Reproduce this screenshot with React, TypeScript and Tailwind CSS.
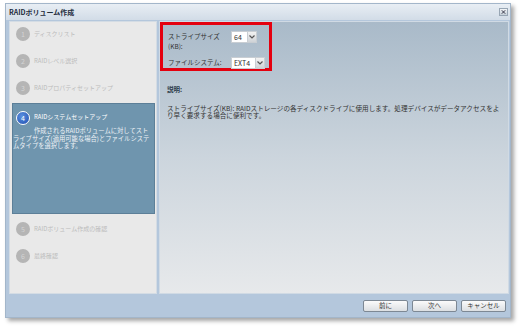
import React from "react";

const font = { fontFamily: '"Noto Sans CJK JP", "Liberation Sans", sans-serif' };

const steps = [
  { n: "1", label: "ディスクリスト", h: "h-[27px]" },
  { n: "2", label: "RAIDレベル選択", h: "h-[27px]" },
  { n: "3", label: "RAIDプロパティセットアップ", h: "h-[22px]" },
];

const after = [
  { n: "5", label: "RAIDボリューム作成の確認", h: "h-[27px]" },
  { n: "6", label: "最終確認", h: "h-[27px]" },
];

function Step({ n, label, h }: { n: string; label: string; h: string }) {
  return (
    <div className={`flex items-start gap-[4px] ${h} pl-[6px]`}>
      <div className="w-[14px] h-[14px] rounded-full bg-[#b5b5b5] text-[#d4d4d4] text-[7px] flex items-center justify-center">
        {n}
      </div>
      <span className="text-[6px] leading-[14px] text-[#bcbcbc]">{label}</span>
    </div>
  );
}

function Select({ value, w }: { value: string; w: string }) {
  return (
    <div className="flex items-center h-[12px]">
      <div className={`${w} h-[12px] bg-white border border-[#c9ced3] text-[7px] text-[#333] flex items-center pl-[2px]`}>
        {value}
      </div>
      <div className="w-[9px] h-[12px] bg-gradient-to-b from-[#f2f2f2] to-[#cfd3d7] border border-l-0 border-[#c9ced3] flex items-center justify-center">
        <svg width="6" height="4" viewBox="0 0 6 4">
          <path d="M0.5 0.5 L3 3 L5.5 0.5" stroke="#555" strokeWidth="1.2" fill="none" />
        </svg>
      </div>
    </div>
  );
}

function Btn({ label }: { label: string }) {
  return (
    <div className="w-[45px] h-[12px] rounded-[2px] border border-[#7d8894] bg-gradient-to-b from-[#fbfbfb] to-[#dcdfe2] text-[6.5px] text-[#333] flex items-center justify-center">
      {label}
    </div>
  );
}

export default function App() {
  return (
    <div className="w-[524px] h-[328px] bg-white pt-[3px] pl-[5px]" style={font}>
      <div className="w-[506px] h-[315px] border border-[#a3b6ca] bg-[#b4c7dc] shadow-[3px_3px_4px_rgba(0,0,0,0.35)] flex flex-col">
        <div className="h-[16px] bg-gradient-to-b from-[#e8eef4] to-[#d2dce7] flex items-center justify-between pl-[3px] pr-[2px]">
          <span className="text-[7px] font-bold text-[#1f2d3d]">RAIDボリューム作成</span>
          <div className="w-[9px] h-[8px] bg-gradient-to-b from-[#f4f6f8] to-[#c5cfd9] border border-[#98a6b4] flex items-center justify-center">
            <svg width="5" height="4" viewBox="0 0 5 4">
              <path d="M0.8 0.3 L4.2 3.7 M4.2 0.3 L0.8 3.7" stroke="#334" strokeWidth="1" />
            </svg>
          </div>
        </div>
        <div className="flex h-[273px] ml-[3px] mr-[1px] mt-[1px] gap-[2px]">
          <div className="w-[148px] bg-[#e9e9e9] border border-[#d4dce4] pt-[5px] flex flex-col">
            {steps.map((s) => (
              <Step key={s.n} {...s} />
            ))}
            <div className="ml-[2px] mr-[1px] h-[111px] bg-[#6f95ae] border border-[#5c7f98] pt-[7px]">
              <div className="flex items-center gap-[4px] pl-[3px]">
                <div className="w-[14px] h-[14px] rounded-full bg-[radial-gradient(circle_at_40%_35%,#5a8fe0,#1e4fb0)] border border-white text-white text-[7px] flex items-center justify-center">
                  4
                </div>
                <span className="text-[6px] text-white -mt-[3px]">RAIDシステムセットアップ</span>
              </div>
              <p className="text-[6.3px] leading-[7.6px] text-[#eef3f7] pr-[1px] mt-[2px] indent-[21px]">
                作成されるRAIDボリュームに対してストライプサイズ(適用可能な場合)とファイルシステムタイプを選択します。
              </p>
            </div>
            <div className="mt-[8px]">
              {after.map((s) => (
                <Step key={s.n} {...s} />
              ))}
            </div>
          </div>
          <div className="flex-1 bg-gradient-to-b from-[#a9bac9] via-[#ccd5dd] to-[#e7e9eb] border border-[#d0dae4]">
            <div className="w-[112px] h-[49px] border-[3px] border-[#e4000f] pl-[5px] pt-[6px] flex flex-col gap-[6px]">
              <div className="flex">
                <span className="w-[63px] text-[6.5px] leading-[10px] text-[#333]">ストライプサイズ (KB):</span>
                <Select value="64" w="w-[17px]" />
              </div>
              <div className="flex items-center">
                <span className="w-[63px] text-[6.5px] text-[#333]">ファイルシステム:</span>
                <Select value="EXT4" w="w-[25px]" />
              </div>
            </div>
            <div className="px-[7px] mt-[14px]">
              <div className="text-[6.5px] font-bold text-[#2b3a4a]">説明:</div>
              <p className="mt-[10px] text-[6.6px] leading-[7.6px] text-[#333]">
                ストライプサイズ(KB): RAIDストレージの各ディスクドライブに使用します。処理デバイスがデータアクセスをより早く要求する場合に便利です。
              </p>
            </div>
          </div>
        </div>
        <div className="flex-1 flex items-center justify-end gap-[4px] pr-[4px]">
          <Btn label="前に" />
          <Btn label="次へ" />
          <Btn label="キャンセル" />
        </div>
      </div>
    </div>
  );
}
